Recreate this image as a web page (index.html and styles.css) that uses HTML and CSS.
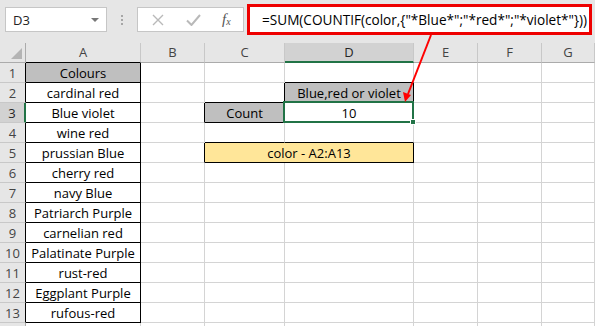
FILE: index.html
```html
<!DOCTYPE html>
<html>
<head>
<meta charset="utf-8">
<link rel="stylesheet" href="styles.css">
</head>
<body>
<div class="page">
  <div class="toolbar">
    <div class="namebox"><span>D3</span><span class="caret"></span></div>
    <div class="dots"><i></i><i></i><i></i></div>
    <div class="btns">
      <svg class="ic" width="12" height="12" viewBox="0 0 12 12"><path d="M1 1L11 11M11 1L1 11" stroke="#b9b9b9" stroke-width="1.4" fill="none"/></svg>
      <svg class="ic" width="15" height="12" viewBox="0 0 15 12"><path d="M1 6.5L5.5 11L14 1" stroke="#b9b9b9" stroke-width="2" fill="none"/></svg>
      <span class="fx">f<sub>x</sub></span>
    </div>
    <div class="formula">=SUM(COUNTIF(color,{"*Blue*";"*red*";"*violet*"}))</div>
  </div>
  <div class="sheet">
    <div class="corner"><span class="tri"></span></div>
    <div class="ch chA">A</div><div class="ch">B</div><div class="ch">C</div><div class="ch chsel">D</div><div class="ch">E</div><div class="ch">F</div><div class="ch">G</div>

    <div class="rh">1</div><div class="c ca gray">Colours</div><div class="c"></div><div class="c"></div><div class="c bb"></div><div class="c"></div><div class="c"></div><div class="c"></div>
    <div class="rh">2</div><div class="c ca">cardinal red</div><div class="c"></div><div class="c br bb"></div><div class="c gray br"><span class="nowrap">Blue,red or violet</span></div><div class="c"></div><div class="c"></div><div class="c"></div>
    <div class="rh rhsel">3</div><div class="c ca">Blue violet</div><div class="c br"></div><div class="c gray br bb">Count</div><div class="c sel-cell">10<div class="sel"><span class="handle"></span></div></div><div class="c"></div><div class="c"></div><div class="c"></div>
    <div class="rh">4</div><div class="c ca">wine red</div><div class="c"></div><div class="c bb"></div><div class="c bb"></div><div class="c"></div><div class="c"></div><div class="c"></div>
    <div class="rh">5</div><div class="c ca">prussian Blue</div><div class="c br"></div><div class="c yellow br bb span2">color - A2:A13</div><div class="c"></div><div class="c"></div><div class="c"></div>
    <div class="rh">6</div><div class="c ca">cherry red</div><div class="c"></div><div class="c"></div><div class="c"></div><div class="c"></div><div class="c"></div><div class="c"></div>
    <div class="rh">7</div><div class="c ca">navy Blue</div><div class="c"></div><div class="c"></div><div class="c"></div><div class="c"></div><div class="c"></div><div class="c"></div>
    <div class="rh">8</div><div class="c ca">Patriarch Purple</div><div class="c"></div><div class="c"></div><div class="c"></div><div class="c"></div><div class="c"></div><div class="c"></div>
    <div class="rh">9</div><div class="c ca">carnelian red</div><div class="c"></div><div class="c"></div><div class="c"></div><div class="c"></div><div class="c"></div><div class="c"></div>
    <div class="rh">10</div><div class="c ca">Palatinate Purple</div><div class="c"></div><div class="c"></div><div class="c"></div><div class="c"></div><div class="c"></div><div class="c"></div>
    <div class="rh">11</div><div class="c ca">rust-red</div><div class="c"></div><div class="c"></div><div class="c"></div><div class="c"></div><div class="c"></div><div class="c"></div>
    <div class="rh">12</div><div class="c ca">Eggplant Purple</div><div class="c"></div><div class="c"></div><div class="c"></div><div class="c"></div><div class="c"></div><div class="c"></div>
    <div class="rh">13</div><div class="c ca">rufous-red</div><div class="c"></div><div class="c"></div><div class="c"></div><div class="c"></div><div class="c"></div><div class="c"></div>
    <div class="rh rhlast"></div><div class="c"></div><div class="c"></div><div class="c"></div><div class="c"></div><div class="c"></div><div class="c"></div><div class="c"></div>
  </div>
  <svg class="arrow" width="595" height="326" viewBox="0 0 595 326">
    <line x1="431" y1="35" x2="408" y2="94" stroke="#ff0000" stroke-width="2"/>
    <polygon points="405,102 403,92 411,95" fill="#ff0000"/>
  </svg>
</div>
</body>
</html>
```

FILE: styles.css
```css
* { box-sizing: border-box; }
html, body { margin: 0; padding: 0; }
body {
  width: 595px;
  height: 326px;
  overflow: hidden;
  background: #fff;
  font-family: "Open Sans", "Noto Sans", sans-serif;
  font-size: 13px;
  color: #000;
}
.page { position: relative; width: 595px; height: 326px; overflow: hidden; }

.toolbar {
  height: 43px;
  background: #e6e6e6;
  display: flex;
  align-items: center;
  padding: 4px 0 8px 5px;
}
.namebox {
  width: 102px;
  height: 25px;
  background: #fff;
  border: 1px solid #c6c6c6;
  display: flex;
  align-items: center;
  justify-content: space-between;
  padding: 0 7px 0 7px;
  color: #222;
}
.caret {
  width: 0; height: 0;
  border-left: 4px solid transparent;
  border-right: 4px solid transparent;
  border-top: 4px solid #777;
}
.dots {
  width: 30px;
  display: flex;
  flex-direction: column;
  align-items: center;
  gap: 2px;
}
.dots i { display: block; width: 2px; height: 2px; background: #a6a6a6; }
.btns {
  width: 107px;
  height: 25px;
  background: #fff;
  border: 1px solid #c6c6c6;
  display: flex;
  align-items: center;
  padding-left: 14px;
}
.btns .ic:first-child { margin-right: 22px; }
.btns .ic:nth-child(2) { margin-right: 21px; }
.fx {
  font-family: "Liberation Serif", "DejaVu Serif", serif;
  font-style: italic;
  font-size: 15px;
  color: #555;
  line-height: 1;
}
.fx sub { font-size: 10px; vertical-align: -1px; }
.formula {
  margin-left: 3px;
  width: 345px;
  height: 31px;
  border: 3px solid #ee0000;
  background: #fff;
  display: flex;
  align-items: center;
  padding-left: 12px;
  white-space: nowrap;
  font-size: 13.6px;
  color: #000;
}

.sheet {
  display: grid;
  grid-template-columns: 26px 115px 64px 80px 129px 64px 64px 53px;
  grid-template-rows: 20px;
  grid-auto-rows: 20px;
}
.corner {
  background: #e6e6e6;
  border-right: 1px solid #ababab;
  border-bottom: 1px solid #ababab;
  position: relative;
}
.tri {
  position: absolute;
  right: 3px;
  bottom: 3px;
  width: 0; height: 0;
  border-left: 11px solid transparent;
  border-bottom: 11px solid #b4b4b4;
}
.ch {
  background: #e6e6e6;
  border-right: 1px solid #c8c8c8;
  border-bottom: 1px solid #ababab;
  text-align: center;
  line-height: 19px;
  color: #444;
}
.chA { border-bottom-color: #000; }
.chsel {
  background: #d2d2d2;
  border-bottom: 2px solid #217346;
  color: #262626;
}
.rh {
  background: #e6e6e6;
  border-right: 1px solid #000;
  border-bottom: 1px solid #c8c8c8;
  text-align: center;
  line-height: 20px;
  color: #444;
}
.rhlast { border-right-color: #ababab; }
.rhsel {
  background: #d2d2d2;
  border-right: 2px solid #217346;
  color: #262626;
}
.c {
  border-right: 1px solid #d4d4d4;
  border-bottom: 1px solid #d4d4d4;
  text-align: center;
  line-height: 20px;
  white-space: nowrap;
}
.ca { border-right-color: #000; border-bottom-color: #000; }
.br { border-right-color: #000; }
.bb { border-bottom-color: #000; }
.gray { background: #bfbfbf; }
.yellow { background: #ffe699; }
.span2 { grid-column: span 2; }
.nowrap { white-space: nowrap; }
.sel-cell { position: relative; }
.sel {
  position: absolute;
  left: -2px;
  top: -2px;
  right: -1px;
  bottom: -1px;
  border: 2px solid #217346;
}
.handle {
  position: absolute;
  right: -4px;
  bottom: -4px;
  width: 6px;
  height: 6px;
  background: #217346;
  border: 1px solid #fff;
}
.arrow { position: absolute; left: 0; top: 0; pointer-events: none; }
```
